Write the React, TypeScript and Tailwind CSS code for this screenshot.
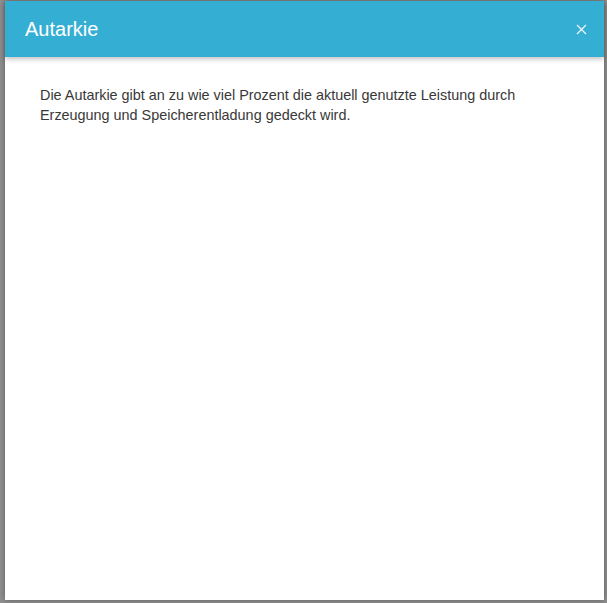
import React from "react";

export default function App() {
  return (
    <div className="h-[603px] w-[607px] bg-[#8f8f8f] pt-[1px] pl-[5px] pr-[3px] pb-[3px] overflow-hidden" style={{ fontFamily: '"Liberation Sans", Arial, sans-serif' }}>
      <div className="flex h-[599px] w-[599px] flex-col bg-white shadow-[0_0_6px_rgba(0,0,0,0.35)]">
        <div className="relative z-10 flex h-[56px] shrink-0 items-center justify-between bg-[#35aed4] pl-[20px] pr-[16px] shadow-[0_2px_5px_rgba(0,0,0,0.25)]">
          <h1 className="text-[20px] leading-none text-white">Autarkie</h1>
          <button className="flex h-[14px] w-[14px] items-center justify-center opacity-90">
            <svg width="11" height="11" viewBox="0 0 11 11">
              <path d="M1 1 L10 10 M10 1 L1 10" stroke="white" strokeWidth="1.3" fill="none" />
            </svg>
          </button>
        </div>
        <div className="px-[35px] pt-[28px]">
          <p className="text-[14.4px] leading-[20px] text-[#383838]">
            Die Autarkie gibt an zu wie viel Prozent die aktuell genutzte Leistung durch Erzeugung und Speicherentladung gedeckt wird.
          </p>
        </div>
      </div>
    </div>
  );
}
